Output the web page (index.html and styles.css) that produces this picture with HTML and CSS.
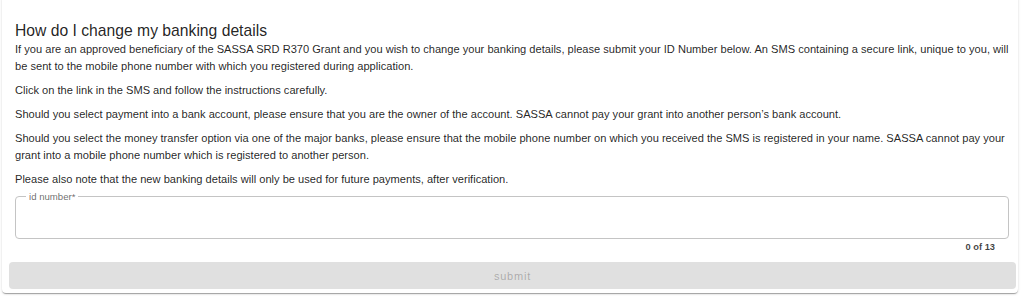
FILE: index.html
```html
<!DOCTYPE html>
<html lang="en">
<head>
<meta charset="utf-8">
<title>How do I change my banking details</title>
<link rel="stylesheet" href="styles.css">
</head>
<body>
<div class="card">
  <div class="content">
    <h2 class="title">How do I change my banking details</h2>
    <p>If you are an approved beneficiary of the SASSA SRD R370 Grant and you wish to change your banking details, please submit your ID Number below. An SMS containing a secure link, unique to you, will be sent to the mobile phone number with which you registered during application.</p>
    <p>Click on the link in the SMS and follow the instructions carefully.</p>
    <p>Should you select payment into a bank account, please ensure that you are the owner of the account. SASSA cannot pay your grant into another person’s bank account.</p>
    <p>Should you select the money transfer option via one of the major banks, please ensure that the mobile phone number on which you received the SMS is registered in your name. SASSA cannot pay your grant into a mobile phone number which is registered to another person.</p>
    <p class="last">Please also note that the new banking details will only be used for future payments, after verification.</p>
    <fieldset class="field">
      <legend class="field-label">id number*</legend>
      <input class="field-input" type="text" aria-label="id number">
    </fieldset>
    <div class="counter">0 of 13</div>
  </div>
  <button class="submit" type="button" disabled>submit</button>
</div>
</body>
</html>
```
FILE: styles.css
```css
html, body {
  margin: 0;
  padding: 0;
  background: #ffffff;
}
body {
  font-family: "Liberation Sans", Arial, sans-serif;
  color: rgba(0, 0, 0, 0.87);
  height: 296px;
  overflow: hidden;
}
.card {
  margin-left: 2px;
  margin-top: -6px;
  width: 1016px;
  box-sizing: border-box;
  padding: 27px 2px 4px 7px;
  background: #fff;
  border-radius: 4px;
  box-shadow: 0 2px 1px -1px rgba(0,0,0,0.2), 0 1px 1px 0 rgba(0,0,0,0.14), 0 1px 3px 0 rgba(0,0,0,0.12);
}
.content {
  padding: 0 7px 0 6px;
}
.title {
  margin: 0;
  font-size: 15.7px;
  font-weight: 400;
  line-height: 20px;
}
.content p {
  margin: 0 0 7px 0;
  font-size: 11.1px;
  line-height: 17px;
}
.content p.last {
  margin-bottom: 3px;
}
.field {
  margin: 0;
  padding: 0 8px;
  border: 1px solid #c4c4c4;
  border-radius: 4px;
  min-width: 0;
}
.field-label {
  margin-left: 2px;
  padding: 0 3px;
  font-size: 9.6px;
  line-height: 11px;
  color: rgba(0, 0, 0, 0.6);
}
.field-input {
  display: block;
  width: 100%;
  height: 36px;
  border: 0;
  outline: 0;
  padding: 0;
  font: inherit;
  font-size: 12px;
  background: transparent;
}
.counter {
  margin: 2px 14px 0;
  text-align: right;
  font-size: 9.3px;
  font-weight: 700;
  line-height: 12px;
  color: rgba(0, 0, 0, 0.75);
}
.submit {
  display: block;
  margin-top: 9px;
  width: 1007px;
  height: 27px;
  border: 0;
  border-radius: 4px;
  background: #e0e0e0;
  color: rgba(0, 0, 0, 0.26);
  font-family: "Liberation Sans", Arial, sans-serif;
  font-size: 11px;
  letter-spacing: 0.8px;
  padding: 0;
}
```
